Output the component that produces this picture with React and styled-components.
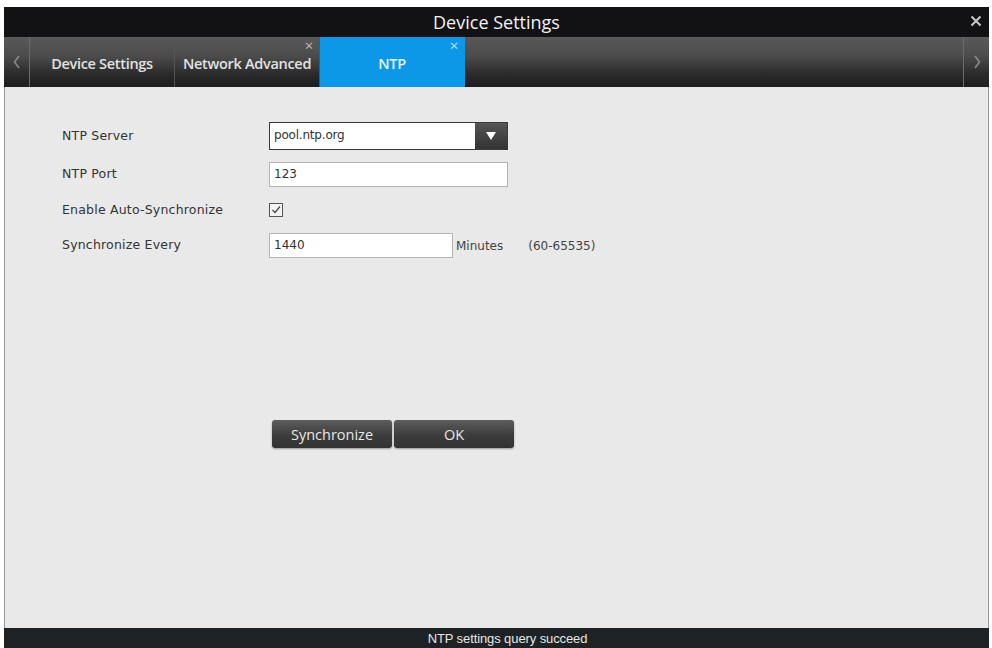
import React from "react";
import styled, { createGlobalStyle } from "styled-components";

const GlobalStyle = createGlobalStyle`
  html, body {
    margin: 0;
    padding: 0;
    background: #ffffff;
  }
  body {
    font-family: "DejaVu Sans", "Liberation Sans", sans-serif;
  }
`;

const Page = styled.div`
  width: 992px;
  height: 648px;
  padding: 7px 3px 0 4px;
  box-sizing: border-box;
  display: flex;
  flex-direction: column;
`;

const TitleBar = styled.div`
  height: 30px;
  background: #121114;
  display: flex;
  align-items: center;
  justify-content: center;
  position: relative;
  color: #f2f2f2;
  font-family: "Open Sans", "DejaVu Sans", sans-serif;
  font-size: 18px;
`;

const CloseButton = styled.span`
  position: absolute;
  right: 7px;
  top: 8px;
  width: 12px;
  height: 12px;
  display: flex;
`;

const TabBar = styled.div`
  height: 50px;
  display: flex;
  background: linear-gradient(#5a5a5a 0%, #4a4a4a 40%, #2a2a2a 75%, #1e1e1e 100%);
`;

const Arrow = styled.div`
  width: 25px;
  display: flex;
  align-items: center;
  justify-content: center;
  border-${(p) => (p.$side === "left" ? "right" : "left")}: 1px solid #6a6a6a;
`;

const Tab = styled.div`
  width: 145px;
  position: relative;
  display: flex;
  align-items: center;
  justify-content: center;
  padding-top: 3px;
  box-sizing: border-box;
  border-right: 1px solid ${(p) => (p.$active ? "transparent" : "#555")};
  background: ${(p) => (p.$active ? "#0c98e6" : "transparent")};
  color: ${(p) => (p.$active ? "#e6f4ff" : "#e2e2e2")};
  font-family: "Open Sans", "DejaVu Sans", sans-serif;
  font-size: 14.5px;
  font-weight: 600;
  letter-spacing: -0.3px;
  white-space: nowrap;
`;

const TabClose = styled.span`
  position: absolute;
  top: 1px;
  right: 6px;
  font-size: 15px;
  line-height: 1;
  color: ${(p) => (p.$active ? "#b9e2fb" : "#bbbbbb")};
  font-weight: 400;
`;

const TabFill = styled.div`
  flex: 1;
`;

const Content = styled.div`
  flex: 1;
  background: #e9e9e9;
  border-left: 1px solid #9a9a9a;
  border-right: 1px solid #9a9a9a;
  padding: 35px 0 0 57px;
  display: flex;
  flex-direction: column;
`;

const Form = styled.div`
  display: grid;
  grid-template-columns: 207px auto;
  row-gap: 12px;
  align-items: center;
  font-size: 12px;
  color: #333;
`;

const Label = styled.div`
  font-size: 12.5px;
  letter-spacing: 0.2px;
  height: ${(p) => p.$h || 26}px;
  display: flex;
  align-items: center;
  padding-bottom: 2px;
  box-sizing: border-box;
`;

const FieldRow = styled.div`
  display: flex;
  align-items: center;
`;

const Select = styled.div`
  width: 239px;
  height: 28px;
  box-sizing: border-box;
  border: 1px solid #3a3a3a;
  background: #fff;
  display: flex;
`;

const SelectText = styled.div`
  flex: 1;
  padding: 5px 0 0 4px;
  font-size: 12px;
  color: #333;
  letter-spacing: -0.2px;
`;

const SelectButton = styled.div`
  width: 32px;
  background: linear-gradient(#555, #333);
  display: flex;
  align-items: center;
  justify-content: center;
`;

const TextBox = styled.div`
  width: ${(p) => p.$w}px;
  height: 25px;
  box-sizing: border-box;
  border: 1px solid #b4b4b4;
  background: #fff;
  padding: 4px 0 0 4px;
  font-size: 12px;
  color: #333;
`;

const CheckBox = styled.div`
  width: 14px;
  height: 14px;
  box-sizing: border-box;
  border: 1px solid #555;
  background: #f4f4f4;
  display: flex;
`;

const Unit = styled.span`
  margin-left: 3px;
  color: #444;
`;

const Range = styled.span`
  margin-left: 25px;
  color: #444;
`;

const ButtonRow = styled.div`
  display: flex;
  gap: 2px;
  margin: 162px 0 0 210px;
`;

const Button = styled.button`
  width: 120px;
  height: 28px;
  border: none;
  border-radius: 3px;
  background: linear-gradient(#5d5d5d, #3c3c3c 55%, #333);
  color: #e8e8e8;
  font-family: "Open Sans", "DejaVu Sans", sans-serif;
  font-size: 14.5px;
  box-shadow: 0 1px 2px rgba(0, 0, 0, 0.35);
`;

const StatusBar = styled.div`
  height: 20px;
  background: #1f2224;
  color: #e6e6e6;
  display: flex;
  align-items: center;
  justify-content: center;
  padding-left: 22px;
  font-family: "Liberation Sans", Arial, sans-serif;
  font-size: 13px;
  letter-spacing: -0.1px;
`;

const Chevron = ({ dir }) => (
  <svg width="8" height="14" viewBox="0 0 8 14">
    <path
      d={dir === "left" ? "M6 1 L1.5 7 L6 13" : "M2 1 L6.5 7 L2 13"}
      fill="none"
      stroke="#8a8a8a"
      strokeWidth="1.6"
    />
  </svg>
);

const App = () => {
  return (
    <Page>
      <GlobalStyle />
      <TitleBar>
        Device Settings
        <CloseButton>
          <svg width="12" height="12" viewBox="0 0 12 12">
            <path d="M1.5 1.5 L10.5 10.5 M10.5 1.5 L1.5 10.5" stroke="#c8c8c8" strokeWidth="2" />
          </svg>
        </CloseButton>
      </TitleBar>
      <TabBar>
        <Arrow $side="left">
          <Chevron dir="left" />
        </Arrow>
        <Tab>Device Settings</Tab>
        <Tab>
          Network Advanced
          <TabClose>×</TabClose>
        </Tab>
        <Tab $active>
          NTP
          <TabClose $active>×</TabClose>
        </Tab>
        <TabFill />
        <Arrow $side="right">
          <Chevron dir="right" />
        </Arrow>
      </TabBar>
      <Content>
        <Form>
          <Label $h={28}>NTP Server</Label>
          <Select>
            <SelectText>pool.ntp.org</SelectText>
            <SelectButton>
              <svg width="10" height="8" viewBox="0 0 10 8">
                <path d="M0 0 H10 L5 8 Z" fill="#fff" />
              </svg>
            </SelectButton>
          </Select>
          <Label $h={25}>NTP Port</Label>
          <TextBox $w={239}>123</TextBox>
          <Label $h={22}>Enable Auto-Synchronize</Label>
          <FieldRow>
            <CheckBox>
              <svg width="12" height="12" viewBox="0 0 12 12">
                <path d="M2.5 6 L5 8.5 L10 2.5" fill="none" stroke="#444" strokeWidth="1.2" />
              </svg>
            </CheckBox>
          </FieldRow>
          <Label $h={25}>Synchronize Every</Label>
          <FieldRow>
            <TextBox $w={184}>1440</TextBox>
            <Unit>Minutes</Unit>
            <Range>(60-65535)</Range>
          </FieldRow>
        </Form>
        <ButtonRow>
          <Button>Synchronize</Button>
          <Button>OK</Button>
        </ButtonRow>
      </Content>
      <StatusBar>NTP settings query succeed</StatusBar>
    </Page>
  );
};

export default App;
